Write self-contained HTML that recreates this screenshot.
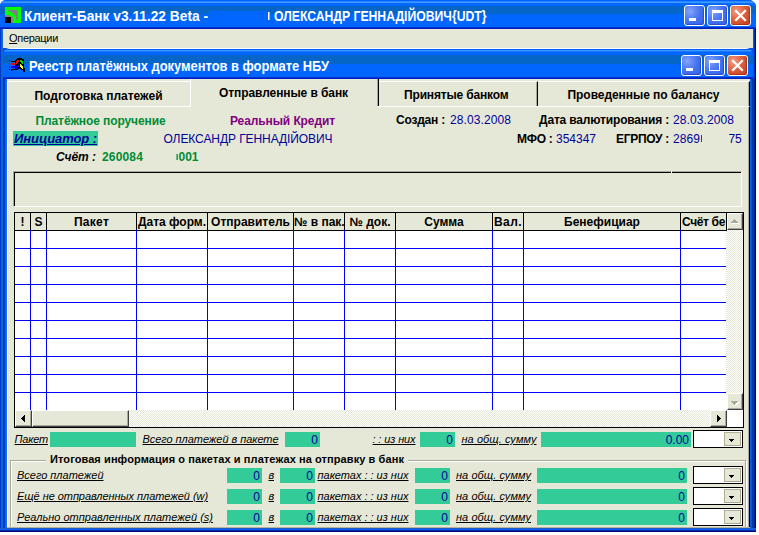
<!DOCTYPE html>
<html><head><meta charset="utf-8"><title>Клиент-Банк</title>
<style>
html,body{margin:0;padding:0;background:#fff;}
body{width:759px;height:535px;position:relative;overflow:hidden;font-family:"Liberation Sans",sans-serif;}
div,span,i,b{box-sizing:border-box;}
.abs{position:absolute;}
.t{position:absolute;white-space:nowrap;line-height:normal;color:#000;}
/* outer window */
#ow{position:absolute;left:0;top:0;width:756px;height:532px;background:#0A50E6;border-radius:6px 7px 0 0;overflow:hidden;}
#otb{position:absolute;left:0;top:0;width:756px;height:29px;
 background:linear-gradient(180deg,#0060FF 0px,#0060FF 1px,#2888FF 1px,#2888FF 2px,#3C98FF 2px,#3C98FF 3px,#0A6CFF 3px,#0A6CFF 4px,#0066FF 4px,#0066FF 6px,#0566C8 6px,#0566C8 14px,#0066FF 14px,#0066FF 27px,#0030D0 27px,#0030D0 28px,#0020C0 28px,#0020C0 29px);}
#oleft{position:absolute;left:0;top:29px;width:3px;height:503px;background:linear-gradient(90deg,#0038D0 0px,#0038D0 1px,#0860F0 1px,#0860F0 2px,#0A6CC8 2px,#0A6CC8 3px);}
#oright{position:absolute;left:753px;top:29px;width:3px;height:503px;background:linear-gradient(90deg,#0A50E8 0,#0A50E8 1px,#0030C0 1px,#0030C0 2px,#000080 2px,#000080 3px);}
#obot{position:absolute;left:0;top:528px;width:756px;height:4px;background:linear-gradient(180deg,#2858C8 0,#2858C8 1px,#0060FF 1px,#0060FF 2px,#0030A0 2px,#0030A0 3px,#000080 3px,#000080 4px);}
#menu{position:absolute;left:3px;top:29px;width:750px;height:19px;background:#E6E8D7;}
/* inner window */
#iw{position:absolute;left:3px;top:48px;width:750px;height:480px;background:#0A50E6;border-radius:7px 7px 0 0;overflow:hidden;}
#itb{position:absolute;left:0;top:0;width:750px;height:31px;
 background:linear-gradient(180deg,#F8FAFF 0px,#F8FAFF 1px,#0060FF 1px,#0060FF 2px,#3C98FF 2px,#3C98FF 3px,#1878FF 3px,#1878FF 4px,#0066FF 4px,#0066FF 7px,#0566C8 7px,#0566C8 16px,#0066FF 16px,#0066FF 29px,#0030D0 29px,#0030D0 30px,#0020C0 30px,#0020C0 31px);}
#ileft{position:absolute;left:0;top:31px;width:4px;height:450px;background:linear-gradient(90deg,#0038C8 0,#0038C8 1px,#1A62E6 1px,#1A62E6 3px,#0A4CD8 3px,#0A4CD8 4px);}
#ibody{position:absolute;left:4px;top:31px;width:743px;height:450px;background:#E6E8D7;}
/* window buttons */
.wb{position:absolute;width:21px;height:21px;border:1px solid #fff;border-radius:3px;background:radial-gradient(circle at 28% 28%,#86A4FA 0%,#5A84F5 32%,#4070F0 58%,#3864EA 100%);box-shadow:inset -1px -1px 1px rgba(0,20,140,.35);}
.wb.x{background:radial-gradient(circle at 28% 28%,#F29C88 0%,#E2704E 34%,#D2502E 64%,#C2401E 100%);box-shadow:inset -1px -1px 1px rgba(100,10,0,.35);}
.wb b{position:absolute;display:block;}
.wb.min b{left:4px;top:12px;width:7px;height:3px;background:#fff;}
.wb.max b{left:4px;top:4px;width:11px;height:11px;border:1px solid #fff;border-top-width:3px;}
.wb.x svg{position:absolute;left:0;top:0;}
/* tabs */
.tab{position:absolute;background:#E6E8D7;}
/* grid */
#grid{position:absolute;left:14px;top:212px;width:730px;height:216px;background:#fff;}
.hc{position:absolute;top:213px;height:17px;background:#E6E8D7;border-right:1px solid #000;font-weight:bold;font-size:12px;line-height:19px;white-space:nowrap;overflow:hidden;}
.vl{position:absolute;top:230px;width:1px;height:180px;background:#0000FF;}
.hl{position:absolute;left:15px;width:711px;height:1px;background:#0000FF;}
.sbtn{position:absolute;width:17px;height:17px;background:#E6E8D7;border:1px solid;border-color:#fff #404040 #404040 #fff;box-shadow:inset -1px -1px 0 #ACA899;}
.track{position:absolute;background:
 repeating-conic-gradient(#fff 0% 25%, #E6E8D7 0% 50%) 0 0/2px 2px;}
/* fields */
.tf{position:absolute;background:#33CC99;color:#000099;font-size:12px;text-align:right;padding-right:2px;white-space:nowrap;overflow:hidden;}
.cb{position:absolute;left:693px;width:50px;height:18px;background:#fff;border:1px solid #000;}
.db{position:absolute;left:30px;top:1px;width:17px;height:14px;background:#E6E8D7;border:1px solid;border-color:#B4AE96 #ACA58A #ACA58A #B4AE96;}
.db svg{position:absolute;left:4px;top:6px;}
</style></head>
<body>
<div id="ow">
 <div id="otb"></div>
 <div id="oleft"></div><div id="oright"></div><div id="obot"></div>
 <div id="menu"></div>
 <div class="abs" style="left:209px;top:11px;width:59px;height:13px;background:#0066FF"></div>
 <div class="abs" style="left:268px;top:12px;width:2px;height:8px;background:linear-gradient(90deg,#fff 0,#fff 1px,#8CB4FF 1px,#8CB4FF 2px)"></div>
 <!-- app icon -->
<svg class="abs" style="left:5px;top:7px" width="16" height="16" viewBox="0 0 16 16" shape-rendering="crispEdges"><path d="M0 0h16v1h-16zM0 1h16v1h-16zM0 2h16v1h-16zM0 3h3v1h-3zM13 3h3v1h-3zM0 4h5v1h-5zM13 4h3v1h-3zM0 5h7v1h-7zM13 5h3v1h-3zM0 6h8v1h-8zM13 6h3v1h-3zM0 7h9v1h-9zM13 7h3v1h-3zM5 8h5v1h-5zM13 8h3v1h-3zM7 9h4v1h-4zM13 9h3v1h-3zM8 10h3v1h-3zM13 10h3v1h-3zM8 11h3v1h-3zM13 11h3v1h-3zM8 12h3v1h-3zM13 12h3v1h-3zM8 13h8v1h-8zM8 14h8v1h-8zM8 15h8v1h-8z" fill="#00FF00"/><path d="M3 3h10v1h-10zM5 4h8v1h-8zM7 5h6v1h-6zM8 6h5v1h-5zM9 7h4v1h-4zM0 8h5v1h-5zM10 8h3v1h-3zM0 9h7v1h-7zM11 9h2v1h-2zM6 10h2v1h-2zM11 10h2v1h-2zM6 11h2v1h-2zM11 11h2v1h-2zM6 12h2v1h-2zM11 12h2v1h-2zM6 13h2v1h-2zM6 14h2v1h-2zM6 15h2v1h-2z" fill="#808080"/><path d="M0 10h6v1h-6zM0 11h6v1h-6zM0 12h6v1h-6zM0 13h6v1h-6zM0 14h6v1h-6zM0 15h6v1h-6z" fill="#000"/></svg>
 <!-- outer window buttons -->
 <div class="wb min" style="left:684px;top:5px"><b></b></div>
 <div class="wb max" style="left:707px;top:5px"><b></b></div>
 <div class="wb x" style="left:730px;top:5px"><svg width="19" height="19" viewBox="0 0 19 19"><path d="M5 5 L14 14 M14 5 L5 14" stroke="#fff" stroke-width="2.2" stroke-linecap="square"/></svg></div>

 <div id="iw">
  <div id="itb"></div>
  <div id="ileft"></div>
  <div id="ibody"></div>
 </div>
 <!-- inner window buttons -->
 <div class="wb min" style="left:681px;top:55px"><b></b></div>
 <div class="wb max" style="left:704px;top:55px"><b></b></div>
 <div class="wb x" style="left:727px;top:55px"><svg width="19" height="19" viewBox="0 0 19 19"><path d="M5 5 L14 14 M14 5 L5 14" stroke="#fff" stroke-width="2.2" stroke-linecap="square"/></svg></div>
 <!-- inner icon (windows flag) -->
<svg class="abs" style="left:9px;top:58px" width="16" height="14" viewBox="0 0 16 14" shape-rendering="crispEdges"><path d="M8 0h5v1h-5zM7 1h8v1h-8zM0 2h1v1h-1zM6 2h2v1h-2zM10 2h1v1h-1zM13 2h2v1h-2zM2 3h5v1h-5zM10 3h1v1h-1zM14 3h1v1h-1zM6 4h1v1h-1zM9 4h3v1h-3zM14 4h1v1h-1zM6 5h1v1h-1zM8 5h5v1h-5zM14 5h1v1h-1zM6 6h5v1h-5zM12 6h3v1h-3zM6 7h2v1h-2zM10 7h1v1h-1zM13 7h2v1h-2zM6 8h1v1h-1zM10 8h1v1h-1zM14 8h1v1h-1zM6 9h1v1h-1zM9 9h3v1h-3zM14 9h1v1h-1zM6 10h1v1h-1zM8 10h5v1h-5zM14 10h2v1h-2zM0 11h1v1h-1zM2 11h7v1h-7zM12 11h4v1h-4zM2 12h1v1h-1zM14 12h2v1h-2zM14 13h2v1h-2z" fill="#000"/><path d="M8 2h2v1h-2zM7 3h3v1h-3zM7 4h2v1h-2zM0 5h1v1h-1zM2 5h4v1h-4zM7 5h1v1h-1zM0 6h1v1h-1zM2 6h4v1h-4z" fill="#FF0000"/><path d="M11 2h2v1h-2zM11 3h3v1h-3zM12 4h2v1h-2zM13 5h1v1h-1z" fill="#00E000"/><path d="M11 6h1v1h-1zM11 7h2v1h-2zM11 8h3v1h-3zM12 9h2v1h-2zM13 10h1v1h-1z" fill="#FFFF00"/><path d="M8 7h2v1h-2zM0 8h1v1h-1zM2 8h4v1h-4zM7 8h3v1h-3zM0 9h1v1h-1zM2 9h4v1h-4zM7 9h2v1h-2zM7 10h1v1h-1z" fill="#0000FF"/></svg>

 <!-- tabs -->
 <div class="abs" style="left:7px;top:106px;width:743px;height:422px;border-left:1px solid #fff;border-top:1px solid #fff;border-right:1px solid #000;box-shadow:inset -1px 0 0 #ACA899;"></div>
 <div class="tab" style="left:7px;top:81px;width:184px;height:25px;border-top:1px solid #fff;border-left:1px solid #fff;"></div>
 <div class="tab" style="left:190px;top:79px;width:189px;height:27px;border-left:1px solid #fff;border-right:1px solid #000;box-shadow:inset -1px 0 0 #ACA899;"></div>
 <div class="tab" style="left:191px;top:106px;width:187px;height:1px;"></div>
 <div class="tab" style="left:379px;top:81px;width:159px;height:25px;border-top:1px solid #fff;border-right:1px solid #000;box-shadow:inset -1px 0 0 #ACA899;"></div>
 <div class="tab" style="left:538px;top:81px;width:212px;height:25px;border-top:1px solid #fff;border-right:1px solid #000;box-shadow:inset -1px 0 0 #ACA899;"></div>

 <!-- initiator highlight -->
 <div class="abs" style="left:13px;top:131px;width:85px;height:15px;background:#33CC99"></div>

 <div class="abs" style="left:701px;top:135px;width:1px;height:7px;background:#3030A8"></div>
 <div class="abs" style="left:176px;top:154px;width:2px;height:6px;background:linear-gradient(90deg,#7CC09A,#1A9A4E)"></div>
 <!-- sunken panel -->
 <div class="abs" style="left:13px;top:171px;width:729px;height:36px;border:1px solid;border-color:#ACA899 #fff #fff #ACA899;box-shadow:inset 1px 1px 0 #000;"></div>
 <div class="abs" style="left:671px;top:171px;width:1px;height:2px;background:#F4F4EA"></div>

 <!-- grid -->
 <div id="grid"></div>
 <div class="abs" style="left:14px;top:212px;width:730px;height:216px;border:1px solid #000;"></div>
 <div class="abs" style="left:14px;top:212px;width:713px;height:1px;background:#000"></div>
 <div class="abs" style="left:14px;top:212px;width:1px;height:198px;background:#000"></div>
 <div class="abs" style="left:15px;top:230px;width:712px;height:1px;background:#000"></div>
<div class="hc" style="left:15px;width:16px;text-align:center;">!</div>
<div class="hc" style="left:31px;width:16px;text-align:center;">S</div>
<div class="hc" style="left:47px;width:90px;text-align:center;letter-spacing:0.3px;">Пакет</div>
<div class="hc" style="left:137px;width:71px;text-align:center;">Дата форм.</div>
<div class="hc" style="left:208px;width:86px;text-align:center;">Отправитель</div>
<div class="hc" style="left:294px;width:51px;text-align:center;">№ в пак.</div>
<div class="hc" style="left:345px;width:51px;text-align:center;">№ док.</div>
<div class="hc" style="left:396px;width:97px;text-align:center;">Сумма</div>
<div class="hc" style="left:493px;width:31px;text-align:center;letter-spacing:0.4px;">Вал.</div>
<div class="hc" style="left:524px;width:157px;text-align:center;">Бенефициар</div>
<div class="hc" style="left:681px;width:46px;text-align:left;padding-left:1px;letter-spacing:-0.35px;">Счёт бе</div>
<div class="vl" style="left:30px"></div>
<div class="vl" style="left:46px"></div>
<div class="vl" style="left:136px"></div>
<div class="vl" style="left:207px"></div>
<div class="vl" style="left:293px"></div>
<div class="vl" style="left:344px"></div>
<div class="vl" style="left:395px"></div>
<div class="vl" style="left:492px"></div>
<div class="vl" style="left:523px"></div>
<div class="vl" style="left:680px"></div>
<div class="hl" style="top:248px"></div>
<div class="hl" style="top:266px"></div>
<div class="hl" style="top:284px"></div>
<div class="hl" style="top:302px"></div>
<div class="hl" style="top:320px"></div>
<div class="hl" style="top:338px"></div>
<div class="hl" style="top:356px"></div>
<div class="hl" style="top:374px"></div>
<div class="hl" style="top:392px"></div>
 <!-- vertical scrollbar -->
 <div class="track" style="left:727px;top:213px;width:16px;height:197px"></div>
 <div class="track" style="left:726px;top:231px;width:1px;height:162px"></div>
 <div class="sbtn" style="left:727px;top:213px;width:16px"><svg class="abs" style="left:3px;top:5px" width="9" height="5" shape-rendering="crispEdges"><path d="M4 1h1v1h-1zM3 2h3v1h-3zM2 3h5v1h-5zM1 4h7v1h-7z" fill="#fff"/><path d="M3 0h1v1h-1zM2 1h3v1h-3zM1 2h5v1h-5zM0 3h7v1h-7z" fill="#ACA899"/></svg></div>
 <div class="sbtn" style="left:727px;top:393px;width:16px"><svg class="abs" style="left:3px;top:7px" width="9" height="5" shape-rendering="crispEdges"><path d="M1 1h7v1h-7zM2 2h5v1h-5zM3 3h3v1h-3zM4 4h1v1h-1z" fill="#fff"/><path d="M0 0h7v1h-7zM1 1h5v1h-5zM2 2h3v1h-3zM3 3h1v1h-1z" fill="#ACA899"/></svg></div>
 <!-- horizontal scrollbar -->
 <div class="track" style="left:15px;top:410px;width:712px;height:17px"></div>
 <div class="sbtn" style="left:15px;top:410px"><svg class="abs" style="left:4px;top:3px" width="5" height="9" shape-rendering="crispEdges"><path d="M4 1h1v7h-1zM3 2h1v5h-1zM2 3h1v3h-1zM1 4h1v1h-1z" fill="#000"/></svg></div>
 <div class="sbtn" style="left:32px;top:410px;width:97px"></div>
 <div class="sbtn" style="left:710px;top:410px"><svg class="abs" style="left:6px;top:3px" width="5" height="9" shape-rendering="crispEdges"><path d="M0 1h1v7h-1zM1 2h1v5h-1zM2 3h1v3h-1zM3 4h1v1h-1z" fill="#000"/></svg></div>
 <div class="abs" style="left:727px;top:410px;width:16px;height:17px;background:#fff"></div>

 <!-- group box -->
 <div class="abs" style="left:10px;top:460px;width:736px;height:80px;border:1px solid #ACA899;box-shadow:1px 1px 0 #fff, inset 1px 1px 0 #fff;"></div>

<div class="tf" style="left:50px;top:432px;width:86px;height:15px;line-height:16px"></div>
<div class="tf" style="left:285px;top:432px;width:35px;height:15px;line-height:16px">0</div>
<div class="tf" style="left:420px;top:432px;width:35px;height:15px;line-height:16px">0</div>
<div class="tf" style="left:541px;top:432px;width:150px;height:15px;line-height:16px">0.00</div>
<div class="tf" style="left:227px;top:468px;width:35px;height:15px;line-height:16px">0</div>
<div class="tf" style="left:280px;top:468px;width:35px;height:15px;line-height:16px">0</div>
<div class="tf" style="left:415px;top:468px;width:35px;height:15px;line-height:16px">0</div>
<div class="tf" style="left:537px;top:468px;width:150px;height:15px;line-height:16px">0</div>
<div class="tf" style="left:227px;top:489px;width:35px;height:15px;line-height:16px">0</div>
<div class="tf" style="left:280px;top:489px;width:35px;height:15px;line-height:16px">0</div>
<div class="tf" style="left:415px;top:489px;width:35px;height:15px;line-height:16px">0</div>
<div class="tf" style="left:537px;top:489px;width:150px;height:15px;line-height:16px">0</div>
<div class="tf" style="left:227px;top:510px;width:35px;height:15px;line-height:16px">0</div>
<div class="tf" style="left:280px;top:510px;width:35px;height:15px;line-height:16px">0</div>
<div class="tf" style="left:415px;top:510px;width:35px;height:15px;line-height:16px">0</div>
<div class="tf" style="left:537px;top:510px;width:150px;height:15px;line-height:16px">0</div>
<div class="cb" style="top:430px"><div class="db"><svg width="5" height="3" shape-rendering="crispEdges"><path d="M0 0h5v1h-5zM1 1h3v1h-3zM2 2h1v1h-1z" fill="#000"/></svg></div></div>
<div class="cb" style="top:466px"><div class="db"><svg width="5" height="3" shape-rendering="crispEdges"><path d="M0 0h5v1h-5zM1 1h3v1h-3zM2 2h1v1h-1z" fill="#000"/></svg></div></div>
<div class="cb" style="top:487px"><div class="db"><svg width="5" height="3" shape-rendering="crispEdges"><path d="M0 0h5v1h-5zM1 1h3v1h-3zM2 2h1v1h-1z" fill="#000"/></svg></div></div>
<div class="cb" style="top:508px"><div class="db"><svg width="5" height="3" shape-rendering="crispEdges"><path d="M0 0h5v1h-5zM1 1h3v1h-3zM2 2h1v1h-1z" fill="#000"/></svg></div></div>
<span class="t" style="left:24px;top:8px;font-size:14px;font-weight:bold;color:#fff;transform:scaleX(0.9812);transform-origin:0 0;">Клиент-Банк v3.11.22 Beta -</span>
<span class="t" style="left:274px;top:8px;font-size:14px;font-weight:bold;color:#fff;transform:scaleX(0.8713);transform-origin:0 0;">ОЛЕКСАНДР ГЕННАДІЙОВИЧ{UDT}</span>
<span class="t" style="left:9px;top:32px;font-size:11px;letter-spacing:-0.309px;"><u>О</u>перации</span>
<span class="t" style="left:28.5px;top:58px;font-size:14px;font-weight:bold;color:#fff;transform:scaleX(0.9199);transform-origin:0 0;">Реестр платёжных документов в формате НБУ</span>
<span class="t" style="left:34.5px;top:89px;font-size:12px;font-weight:bold;letter-spacing:-0.003px;">Подготовка платежей</span>
<span class="t" style="left:219px;top:86px;font-size:12px;font-weight:bold;letter-spacing:-0.086px;">Отправленные в банк</span>
<span class="t" style="left:404px;top:88px;font-size:12px;font-weight:bold;letter-spacing:-0.164px;">Принятые банком</span>
<span class="t" style="left:567.5px;top:88px;font-size:12px;font-weight:bold;letter-spacing:-0.051px;">Проведенные по балансу</span>
<span class="t" style="left:35.5px;top:114px;font-size:12px;font-weight:bold;color:#008C36;letter-spacing:-0.102px;">Платёжное поручение</span>
<span class="t" style="left:230px;top:114px;font-size:12px;font-weight:bold;color:#800080;letter-spacing:-0.098px;">Реальный Кредит</span>
<span class="t" style="left:396px;top:113px;font-size:12px;font-weight:bold;letter-spacing:-0.209px;">Создан :</span>
<span class="t" style="left:450px;top:113px;font-size:12px;color:#000099;letter-spacing:0.094px;">28.03.2008</span>
<span class="t" style="left:539px;top:113px;font-size:12px;font-weight:bold;letter-spacing:-0.167px;">Дата валютирования :</span>
<span class="t" style="left:673px;top:113px;font-size:12px;color:#000099;letter-spacing:0.094px;">28.03.2008</span>
<span class="t" style="left:14px;top:131px;font-size:13px;font-weight:bold;font-style:italic;color:#000099;letter-spacing:-0.085px;text-decoration:underline;">Инициатор :</span>
<span class="t" style="left:163.5px;top:132px;font-size:12px;color:#000099;letter-spacing:-0.08px;">ОЛЕКСАНДР ГЕННАДІЙОВИЧ</span>
<span class="t" style="left:517px;top:132px;font-size:12px;font-weight:bold;letter-spacing:-0.281px;">МФО :</span>
<span class="t" style="left:556px;top:132px;font-size:12px;color:#000099;letter-spacing:-0.008px;">354347</span>
<span class="t" style="left:616px;top:132px;font-size:12px;font-weight:bold;letter-spacing:-0.283px;">ЕГРПОУ :</span>
<span class="t" style="left:673px;top:132px;font-size:12px;color:#000099;letter-spacing:0.074px;">2869</span>
<span class="t" style="left:728.5px;top:132px;font-size:12px;color:#000099;letter-spacing:-0.18px;">75</span>
<span class="t" style="left:56px;top:150px;font-size:12px;font-weight:bold;font-style:italic;letter-spacing:-0.031px;">Счёт :</span>
<span class="t" style="left:102px;top:150px;font-size:12px;font-weight:bold;color:#008C36;letter-spacing:0.159px;">260084</span>
<span class="t" style="left:178.5px;top:150px;font-size:12px;font-weight:bold;color:#008C36;letter-spacing:-0.01px;">001</span>
<span class="t" style="left:14.5px;top:433px;font-size:11px;font-style:italic;letter-spacing:-0.191px;text-decoration:underline;">Пакет</span>
<span class="t" style="left:142.5px;top:433px;font-size:11px;font-style:italic;letter-spacing:-0.055px;text-decoration:underline;">Всего платежей в пакете</span>
<span class="t" style="left:372.5px;top:433px;font-size:11px;font-style:italic;letter-spacing:-0.119px;text-decoration:underline;">: : из них</span>
<span class="t" style="left:461.5px;top:433px;font-size:11px;font-style:italic;letter-spacing:0.05px;text-decoration:underline;">на общ. сумму</span>
<span class="t" style="left:50px;top:453px;font-size:11px;font-weight:bold;letter-spacing:0.088px;background:#E6E8D7;padding:0 4px 0 4px;margin-left:-4px;">Итоговая информация о пакетах и платежах на отправку в банк</span>
<span class="t" style="left:17px;top:469px;font-size:11px;font-style:italic;letter-spacing:-0.019px;text-decoration:underline;">Всего платежей</span>
<span class="t" style="left:268.5px;top:469px;font-size:11px;font-style:italic;letter-spacing:-0.25px;text-decoration:underline;">в</span>
<span class="t" style="left:317.5px;top:469px;font-size:11px;font-style:italic;letter-spacing:-0.015px;text-decoration:underline;">пакетах : : из них</span>
<span class="t" style="left:456px;top:469px;font-size:11px;font-style:italic;letter-spacing:0.05px;text-decoration:underline;">на общ. сумму</span>
<span class="t" style="left:17px;top:490px;font-size:11px;font-style:italic;letter-spacing:-0.056px;text-decoration:underline;">Ещё не отправленных платежей (w)</span>
<span class="t" style="left:268.5px;top:490px;font-size:11px;font-style:italic;letter-spacing:-0.25px;text-decoration:underline;">в</span>
<span class="t" style="left:317.5px;top:490px;font-size:11px;font-style:italic;letter-spacing:-0.015px;text-decoration:underline;">пакетах : : из них</span>
<span class="t" style="left:456px;top:490px;font-size:11px;font-style:italic;letter-spacing:0.05px;text-decoration:underline;">на общ. сумму</span>
<span class="t" style="left:17px;top:511px;font-size:11px;font-style:italic;letter-spacing:0.01px;text-decoration:underline;">Реально отправленных платежей (s)</span>
<span class="t" style="left:268.5px;top:511px;font-size:11px;font-style:italic;letter-spacing:-0.25px;text-decoration:underline;">в</span>
<span class="t" style="left:317.5px;top:511px;font-size:11px;font-style:italic;letter-spacing:-0.015px;text-decoration:underline;">пакетах : : из них</span>
<span class="t" style="left:456px;top:511px;font-size:11px;font-style:italic;letter-spacing:0.05px;text-decoration:underline;">на общ. сумму</span>
 <!-- cover bottom -->
 <div class="abs" style="left:7px;top:527px;width:743px;height:1px;background:#B8B49C"></div>
 <div id="obot2" class="abs" style="left:0;top:528px;width:756px;height:4px;background:linear-gradient(180deg,#2858C8 0,#2858C8 1px,#0060FF 1px,#0060FF 2px,#0030A0 2px,#0030A0 3px,#000080 3px,#000080 4px);"></div>
 <div class="abs" style="left:0;top:79px;width:7px;height:449px;background:linear-gradient(90deg,#0038D0 0px,#0038D0 1px,#0860F0 1px,#0860F0 2px,#0A6CC8 2px,#0A6CC8 3px,#0030C8 3px,#0030C8 4px,#0038D0 4px,#0038D0 5px,#0A64F8 5px,#0A64F8 6px,#1070F0 6px,#1070F0 7px);"></div>
 <div class="abs" style="left:750px;top:79px;width:6px;height:449px;background:linear-gradient(90deg,#0A5CF0 0px,#0A5CF0 1px,#0850E0 1px,#0850E0 2px,#0838A8 2px,#0838A8 3px,#0230C8 3px,#0230C8 4px,#002CA0 4px,#002CA0 5px,#000080 5px,#000080 6px);"></div>
</div>
</body></html>
